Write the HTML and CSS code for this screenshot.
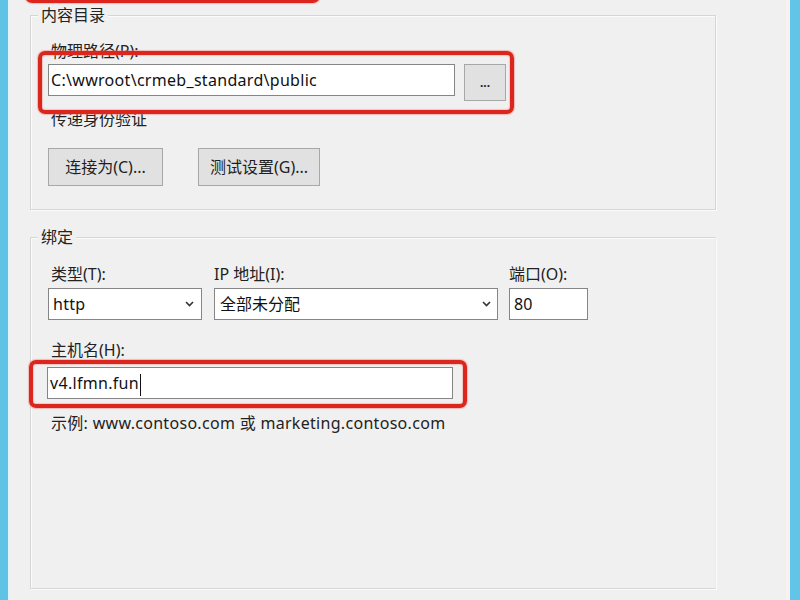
FILE: index.html
```html
<!DOCTYPE html>
<html lang="zh-CN">
<head>
<meta charset="utf-8">
<title>添加网站</title>
<link rel="stylesheet" href="styles.css">
</head>
<body>
<div class="window">
  <div class="content">
    <div class="mark mark-top"></div>

    <fieldset class="group group-dir">
      <legend>内容目录</legend>
      <div class="lbl lbl-path">物理路径(P):</div>
      <div class="row">
        <div class="field field-path latin">C:\wwroot\crmeb_standard\public</div>
        <div class="btn btn-browse">...</div>
      </div>
      <div class="lbl lbl-auth">传递身份验证</div>
      <div class="btnrow">
        <div class="btn btn-connect">连接为(C)...</div>
        <div class="btn btn-test">测试设置(G)...</div>
      </div>
    </fieldset>

    <fieldset class="group group-bind">
      <legend>绑定</legend>
      <div class="bindgrid">
        <div class="lbl">类型(T):</div>
        <div class="lbl lbl-flush">IP 地址(I):</div>
        <div class="lbl lbl-flush">端口(O):</div>
        <div class="field select"><span class="latin">http</span><svg class="chev" width="9" height="6" viewBox="0 0 9 6"><polyline points="1,1 4.5,4.5 8,1" fill="none" stroke="#333" stroke-width="1.6"/></svg></div>
        <div class="field select select-ip"><span>全部未分配</span><svg class="chev" width="9" height="6" viewBox="0 0 9 6"><polyline points="1,1 4.5,4.5 8,1" fill="none" stroke="#333" stroke-width="1.6"/></svg></div>
        <div class="field field-port">80</div>
      </div>
      <div class="lbl lbl-host">主机名(H):</div>
      <div class="field field-host latin">v4.lfmn.fun<span class="caret"></span></div>
      <div class="lbl lbl-example latin">示例: www.contoso.com 或 marketing.contoso.com</div>
    </fieldset>

    <div class="mark mark-path"></div>
    <div class="mark mark-host"></div>
  </div>
</div>
</body>
</html>
```

FILE: styles.css
```css
html, body {
  margin: 0;
  padding: 0;
}

body {
  width: 800px;
  height: 600px;
  overflow: hidden;
  background: #f0f0f0;
  font-family: "Noto Sans", "Noto Sans CJK SC", sans-serif;
  font-size: 16px;
  line-height: 20px;
  color: #1e1e1e;
}

.latin {
  letter-spacing: 0.3px;
}

.window {
  width: 800px;
  height: 600px;
  box-sizing: border-box;
  border-left: 8px solid #5fc3e6;
  border-right: 10px solid #62c4e6;
  overflow: hidden;
}

.content {
  position: relative;
  height: 100%;
  box-sizing: border-box;
  border-left: 2px solid #e2f4fb;
  border-right: 4px solid #f6f2ef;
  padding-top: 5px;
}

.group {
  margin: 0 0 0 20px;
  width: 686px;
  min-inline-size: 0;
  box-sizing: border-box;
  border: 1px solid #d6d6d6;
  box-shadow: inset 1px 1px 0 #fbfbfb, 1px 1px 0 #fbfbfb;
  padding: 0 0 23px 17px;
}

.group legend {
  margin-left: -10px;
  padding: 0 3px;
  line-height: 20px;
  background: #f0f0f0;
  color: #222;
}

.group-bind {
  margin-top: 17px;
  padding-bottom: 155px;
  border-right-color: #ebebeb;
}

.lbl {
  padding-left: 3px;
  color: #222;
  white-space: nowrap;
}

.lbl-flush {
  padding-left: 0;
}

.lbl-path {
  margin-top: 16px;
}

.row {
  display: flex;
  align-items: flex-start;
  gap: 9px;
  margin-top: 3px;
}

.field {
  box-sizing: border-box;
  height: 32px;
  background: #fff;
  border: 1px solid #858585;
  padding: 0 4px;
  line-height: 30px;
  color: #111;
  white-space: nowrap;
  overflow: hidden;
}

.field-path {
  width: 407px;
  padding-left: 2px;
}

.btn {
  box-sizing: border-box;
  background: #e1e1e1;
  border: 1px solid #a7a7a7;
  text-align: center;
  color: #1e1e1e;
  white-space: nowrap;
}

.btn-browse {
  width: 42px;
  height: 37px;
  line-height: 35px;
  font-size: 12px;
  font-weight: bold;
}

.lbl-auth {
  margin-top: 8px;
}

.btnrow {
  display: flex;
  gap: 35px;
  margin-top: 19px;
}

.btnrow .btn {
  height: 38px;
  line-height: 36px;
}

.btn-connect {
  width: 115px;
}

.btn-test {
  width: 122px;
}

.bindgrid {
  display: grid;
  grid-template-columns: 154px 284px 78px;
  column-gap: 12px;
  row-gap: 4px;
  margin-top: 17px;
}

.bindgrid .lbl:nth-child(3) {
  margin-left: -1px;
}

.select {
  display: flex;
  align-items: center;
  justify-content: space-between;
  padding: 0 7px 0 4px;
}

.select-ip {
  padding-left: 5px;
  padding-right: 6px;
}

.chev {
  display: block;
  flex: none;
}

.field-port {
  margin-left: -1px;
}

.lbl-host {
  margin-top: 20px;
}

.field-host {
  width: 406px;
  margin-top: 7px;
  margin-left: -1px;
  padding-left: 2px;
}

.caret {
  display: inline-block;
  width: 0;
  height: 22px;
  border-left: 1px solid #111;
  vertical-align: middle;
  margin-left: 1px;
}

.lbl-example {
  margin-top: 14px;
}

.mark {
  position: absolute;
  box-sizing: border-box;
  border: 4px solid #dc251c;
  border-radius: 7px;
  box-shadow: 0 0 1px 1px rgba(240, 120, 110, 0.45), inset 0 0 1px 1px rgba(240, 120, 110, 0.35);
  pointer-events: none;
}

.mark-top {
  left: 15px;
  top: -57px;
  width: 295px;
  height: 60px;
}

.mark-path {
  left: 28px;
  top: 51px;
  width: 476px;
  height: 63px;
}

.mark-host {
  left: 19px;
  top: 360px;
  width: 438px;
  height: 48px;
}
```
